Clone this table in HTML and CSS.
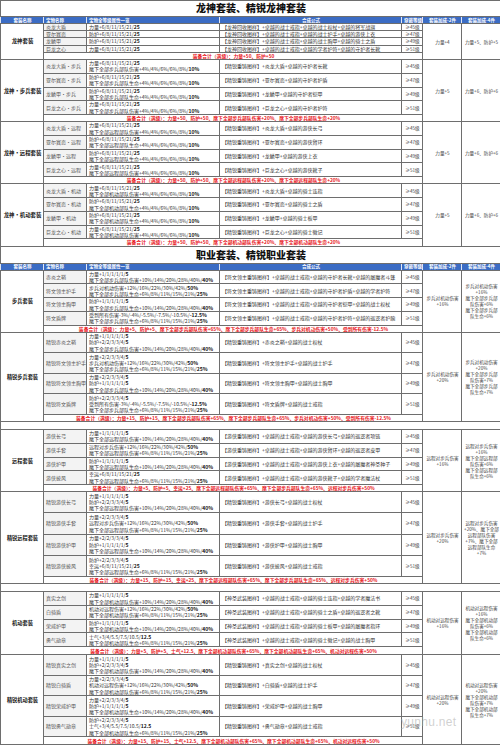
FILE: index.html
```html
<!DOCTYPE html>
<html lang="zh-CN">
<head>
<meta charset="utf-8">
<title>龙神套装、精锐龙神套装</title>
<link rel="stylesheet" href="styles.css">
</head>
<body>
<div class="page">
<table class="sheet">
<colgroup>
<col class="c1"><col class="c2"><col class="c3"><col class="c4"><col class="c5"><col class="c6"><col class="c7">
</colgroup>
<tbody>
<tr class="title t1"><td colspan="7">龙神套装、精锐龙神套装</td></tr>
<tr class="hd"><td class="ctr">套装名称</td><td>宝物名称</td><td>宝物全等级属性一览</td><td class="ctr">合成公式</td><td class="ctr">穿戴等级</td><td class="ctr">套装加成-2件</td><td class="ctr">套装加成-4件</td></tr>

<tr class="r1"><td class="set" rowspan="5">龙神套装</td><td class="item">炎龙大盾</td><td class="attr">力量+6/8/11/15/21/<b>25</b></td><td class="fm">【龙神回收图样】+卓越的战士戒指+卓越的战士权杖+卓越的将军战旗</td><td class="lvl">≥45级</td><td class="bonus" rowspan="5">力量+4</td><td class="bonus" rowspan="5">力量+5、防护+5</td></tr>
<tr class="r1"><td class="item">亚尔赛恋</td><td class="attr">防护+6/8/11/15/21/<b>25</b></td><td class="fm">【龙神回收图样】+卓越的战士戒指+卓越的战士护手+卓越的游侠上衣</td><td class="lvl">≥47级</td></tr>
<tr class="r1"><td class="item">龙鳞甲</td><td class="attr">防护+6/8/11/15/21/<b>25</b></td><td class="fm">【龙神回收图样】+卓越的战士戒指+卓越的战士胸甲+卓越的骑士之盾</td><td class="lvl">≥49级</td></tr>
<tr class="r1"><td class="item">巨龙之心</td><td class="attr">力量+6/8/11/15/21/<b>25</b></td><td class="fm">【龙神回收图样】+卓越的战士戒指+卓越的学者护符+卓越的守护者长靴</td><td class="lvl">≥51级</td></tr>
<tr class="tot"><td class="total" colspan="4">装备合计（满级）：力量+50、防护+50</td></tr>

<tr class="r2 sep"><td class="set" rowspan="5">龙神·步兵套装</td><td class="item">炎龙大盾·步兵</td><td class="attr">力量+6/8/11/15/21/<b>25</b><br>麾下全部步兵部队伤害+4%/4%/6%/6%/8%/<b>10%</b></td><td class="fm">【精锐重铸图样】+炎龙大盾+卓越的守护者长靴</td><td class="lvl">≥45级</td><td class="bonus" rowspan="5">力量+5</td><td class="bonus" rowspan="5">力量+6、防护+6</td></tr>
<tr class="r2"><td class="item">亚尔赛恋·步兵</td><td class="attr">防护+6/8/11/15/21/<b>25</b><br>麾下全部步兵部队生命+4%/4%/6%/6%/8%/<b>10%</b></td><td class="fm">【精锐重铸图样】+亚尔赛恋+卓越的守护者护盾</td><td class="lvl">≥47级</td></tr>
<tr class="r2"><td class="item">龙鳞甲·步兵</td><td class="attr">防护+6/8/11/15/21/<b>25</b><br>麾下全部步兵部队生命+4%/4%/6%/6%/8%/<b>10%</b></td><td class="fm">【精锐重铸图样】+龙鳞甲+卓越的守护者铠甲</td><td class="lvl">≥49级</td></tr>
<tr class="r2"><td class="item">巨龙之心·步兵</td><td class="attr">力量+6/8/11/15/21/<b>25</b><br>麾下全部步兵部队伤害+4%/4%/6%/6%/8%/<b>10%</b></td><td class="fm">【精锐重铸图样】+巨龙之心+卓越的守护者护符</td><td class="lvl">≥51级</td></tr>
<tr class="tot"><td class="total" colspan="4">装备合计（满级）：力量+50、防护+50、麾下全部步兵部队伤害+20%、麾下全部步兵部队生命+20%</td></tr>

<tr class="r2 sep"><td class="set" rowspan="5">龙神·远程套装</td><td class="item">炎龙大盾·远程</td><td class="attr">力量+6/8/11/15/21/<b>25</b><br>麾下全部远程部队伤害+4%/4%/6%/6%/8%/<b>10%</b></td><td class="fm">【精锐重铸图样】+炎龙大盾+卓越的游侠长弓</td><td class="lvl">≥45级</td><td class="bonus" rowspan="5">力量+5</td><td class="bonus" rowspan="5">力量+6、防护+6</td></tr>
<tr class="r2"><td class="item">亚尔赛恋·远程</td><td class="attr">防护+6/8/11/15/21/<b>25</b><br>麾下全部远程部队生命+4%/4%/6%/6%/8%/<b>10%</b></td><td class="fm">【精锐重铸图样】+亚尔赛恋+卓越的游侠臂环</td><td class="lvl">≥47级</td></tr>
<tr class="r2"><td class="item">龙鳞甲·远程</td><td class="attr">防护+6/8/11/15/21/<b>25</b><br>麾下全部远程部队生命+4%/4%/6%/6%/8%/<b>10%</b></td><td class="fm">【精锐重铸图样】+龙鳞甲+卓越的游侠上衣</td><td class="lvl">≥49级</td></tr>
<tr class="r2"><td class="item">巨龙之心·远程</td><td class="attr">力量+6/8/11/15/21/<b>25</b><br>麾下全部远程部队伤害+4%/4%/6%/6%/8%/<b>10%</b></td><td class="fm">【精锐重铸图样】+巨龙之心+卓越的游侠靴子</td><td class="lvl">≥51级</td></tr>
<tr class="tot"><td class="total" colspan="4">装备合计（满级）：力量+50、防护+50、麾下全部远程部队伤害+20%、麾下全部远程部队生命+20%</td></tr>

<tr class="r2 sep"><td class="set" rowspan="5">龙神·机动套装</td><td class="item">炎龙大盾·机动</td><td class="attr">力量+6/8/11/15/21/<b>25</b><br>麾下全部机动部队伤害+4%/4%/6%/6%/8%/<b>10%</b></td><td class="fm">【精锐重铸图样】+炎龙大盾+卓越的骑士连指</td><td class="lvl">≥45级</td><td class="bonus" rowspan="5">力量+5</td><td class="bonus" rowspan="5">力量+6、防护+6</td></tr>
<tr class="r2"><td class="item">亚尔赛恋·机动</td><td class="attr">防护+6/8/11/15/21/<b>25</b><br>麾下全部机动部队生命+4%/4%/6%/6%/8%/<b>10%</b></td><td class="fm">【精锐重铸图样】+亚尔赛恋+卓越的骑士之盾</td><td class="lvl">≥47级</td></tr>
<tr class="r2"><td class="item">龙鳞甲·机动</td><td class="attr">防护+6/8/11/15/21/<b>25</b><br>麾下全部机动部队生命+4%/4%/6%/6%/8%/<b>10%</b></td><td class="fm">【精锐重铸图样】+龙鳞甲+卓越的骑士板甲</td><td class="lvl">≥49级</td></tr>
<tr class="r2"><td class="item">巨龙之心·机动</td><td class="attr">力量+6/8/11/15/21/<b>25</b><br>麾下全部机动部队伤害+4%/4%/6%/6%/8%/<b>10%</b></td><td class="fm">【精锐重铸图样】+巨龙之心+卓越的骑士徽记</td><td class="lvl">≥51级</td></tr>
<tr class="tot"><td class="total" colspan="4">装备合计（满级）：力量+50、防护+50、麾下全部机动部队伤害+20%、麾下全部机动部队生命+20%</td></tr>

<tr class="title t2"><td colspan="7">职业套装、精锐职业套装</td></tr>
<tr class="hd"><td class="ctr">套装名称</td><td>宝物名称</td><td>宝物全等级属性一览</td><td class="ctr">合成公式</td><td class="ctr">穿戴等级</td><td class="ctr">套装加成-2件</td><td class="ctr">套装加成-4件</td></tr>

<tr class="r2"><td class="set plain" rowspan="5">步兵套装</td><td class="item">赤炎之鞘</td><td class="attr">力量+1/1/1/1/1/<b>5</b><br>麾下全部步兵部队伤害+10%/14%/20%/28%/40%/<b>40%</b></td><td class="fm">【符文领主重铸图样】+卓越的战士戒指+卓越的守护者长靴+卓越的屠魔者斗篷</td><td class="lvl">≥45级</td><td class="bonus" rowspan="5">步兵对机动伤害<br>+16%</td><td class="bonus" rowspan="5">步兵对机动伤害<br>+16%<br>麾下全部步兵部<br>队伤害+6%<br>麾下全部步兵部<br>队生命+6%</td></tr>
<tr class="r2"><td class="item">符文领主护手</td><td class="attr">步兵对机动伤害+12%/16%/22%/30%/42%/<b>50%</b><br>麾下全部步兵部队生命+6%/8%/11%/15%/21%/<b>25%</b></td><td class="fm">【符文领主重铸图样】+卓越的战士戒指+卓越的守护者护盾+卓越的学者护符</td><td class="lvl">≥47级</td></tr>
<tr class="r2"><td class="item">符文领主胸甲</td><td class="attr">防护+1/1/1/1/1/<b>5</b><br>麾下全部步兵部队生命+10%/14%/20%/28%/40%/<b>40%</b></td><td class="fm">【符文领主重铸图样】+卓越的战士戒指+卓越的守护者铠甲+卓越的战士权杖</td><td class="lvl">≥49级</td></tr>
<tr class="r2"><td class="item">符文盾牌</td><td class="attr">受到所有伤害-3%/-4%/-5.5%/-7.5%/-10.5%/<b>-12.5%</b><br>麾下全部步兵部队生命+6%/8%/11%/15%/21%/<b>25%</b></td><td class="fm">【符文领主重铸图样】+卓越的战士戒指+卓越的守护者护符+卓越的巡逻者护腕</td><td class="lvl">≥51级</td></tr>
<tr class="tot2"><td class="total" colspan="4">装备合计（满级）：力量+5、防护+5、麾下全部步兵部队伤害+65%、麾下全部步兵部队生命+65%、步兵对机动伤害+50%、受到所有伤害-12.5%</td></tr>

<tr class="r3 sep"><td class="set plain" rowspan="5">精锐步兵套装</td><td class="item">精锐赤炎之鞘</td><td class="attr">力量+1/1/1/1/1/<b>5</b><br>防护+2/2/3/3/4/<b>5</b><br>麾下全部步兵部队伤害+10%/14%/20%/28%/40%/<b>40%</b></td><td class="fm">【精锐重铸图样】+赤炎之鞘+卓越的战士权杖</td><td class="lvl">≥45级</td><td class="bonus" rowspan="5">步兵对机动伤害<br>+20%</td><td class="bonus" rowspan="5">步兵对机动伤害<br>+20%<br>麾下全部步兵部<br>队伤害+7%<br>麾下全部步兵部<br>队生命+7%</td></tr>
<tr class="r3"><td class="item">精锐符文领主护手</td><td class="attr">力量+2/2/3/3/4/<b>5</b><br>步兵对机动伤害+12%/16%/22%/30%/42%/<b>50%</b><br>麾下全部步兵部队生命+6%/8%/11%/15%/21%/<b>25%</b></td><td class="fm">【精锐重铸图样】+符文领主护手+卓越的战士护手</td><td class="lvl">≥47级</td></tr>
<tr class="r3"><td class="item">精锐符文领主胸甲</td><td class="attr">力量+2/2/3/3/4/<b>5</b><br>防护+1/1/1/1/1/<b>5</b><br>麾下全部步兵部队生命+10%/14%/20%/28%/40%/<b>40%</b></td><td class="fm">【精锐重铸图样】+符文领主胸甲+卓越的战士胸甲</td><td class="lvl">≥49级</td></tr>
<tr class="r3"><td class="item">精锐符文盾牌</td><td class="attr">防护+2/2/3/3/4/<b>5</b><br>受到所有伤害-3%/-4%/-5.5%/-7.5%/-10.5%/<b>-12.5%</b><br>麾下全部步兵部队生命+6%/8%/11%/15%/21%/<b>25%</b></td><td class="fm">【精锐重铸图样】+符文盾牌+卓越的战士戒指</td><td class="lvl">≥51级</td></tr>
<tr class="tot"><td class="total" colspan="4">装备合计（满级）：力量+15、防护+15、麾下全部步兵部队伤害+65%、麾下全部步兵部队生命+65%、步兵对机动伤害+50%、受到所有伤害-12.5%</td></tr>
<tr class="gap"><td colspan="7"></td></tr>

<tr class="r2"><td class="set plain" rowspan="5">远程套装</td><td class="item">游侠长弓</td><td class="attr">力量+1/1/1/1/1/<b>5</b><br>麾下全部远程部队伤害+10%/14%/20%/28%/40%/<b>40%</b></td><td class="fm">【游侠重铸图样】+卓越的战士戒指+卓越的游侠长弓+卓越的巡逻者项链</td><td class="lvl">≥45级</td><td class="bonus" rowspan="5">远程对步兵伤害<br>+16%</td><td class="bonus" rowspan="5">远程对步兵伤害<br>+16%<br>麾下全部远程部<br>队伤害+6%<br>麾下全部远程部<br>队生命+6%</td></tr>
<tr class="r2"><td class="item">游侠手套</td><td class="attr">远程对步兵伤害+12%/16%/22%/30%/42%/<b>50%</b><br>麾下全部远程部队伤害+6%/8%/11%/15%/21%/<b>25%</b></td><td class="fm">【游侠重铸图样】+卓越的战士戒指+卓越的游侠臂环+卓越的巡逻者皮甲</td><td class="lvl">≥47级</td></tr>
<tr class="r2"><td class="item">游侠护甲</td><td class="attr">防护+1/1/1/1/1/<b>5</b><br>麾下全部远程部队生命+10%/14%/20%/28%/40%/<b>40%</b></td><td class="fm">【游侠重铸图样】+卓越的战士戒指+卓越的游侠上衣+卓越的屠魔者神圣种子</td><td class="lvl">≥49级</td></tr>
<tr class="r2"><td class="item">游侠披风</td><td class="attr">幸运+6/8/11/15/21/<b>25</b><br>麾下全部远程部队生命+6%/8%/11%/15%/21%/<b>25%</b></td><td class="fm">【游侠重铸图样】+卓越的战士戒指+卓越的游侠靴子+卓越的学者魔法杖</td><td class="lvl">≥51级</td></tr>
<tr class="tot2"><td class="total" colspan="4">装备合计（满级）：力量+5、防护+5、幸运+25、麾下全部远程部队伤害+65%、麾下全部步兵部队生命+65%、远程对步兵伤害+50%</td></tr>

<tr class="r3b sep"><td class="set plain" rowspan="5">精锐远程套装</td><td class="item">精锐游侠长弓</td><td class="attr">力量+1/1/1/1/1/<b>5</b><br>防护+2/2/3/3/4/<b>5</b><br>麾下全部远程部队伤害+10%/14%/20%/28%/40%/<b>40%</b></td><td class="fm">【精锐重铸图样】+游侠长弓+卓越的战士权杖</td><td class="lvl">≥45级</td><td class="bonus" rowspan="5">远程对步兵伤害<br>+20%</td><td class="bonus" rowspan="5">远程对步兵伤害<br>+20%、麾下全部<br>远程部队伤害<br>+7%、麾下全部<br>远程部队生命<br>+7%</td></tr>
<tr class="r3b"><td class="item">精锐游侠手套</td><td class="attr">力量+2/2/3/3/4/<b>5</b><br>远程对步兵伤害+12%/16%/22%/30%/42%/<b>50%</b><br>麾下全部远程部队伤害+6%/8%/11%/15%/21%/<b>25%</b></td><td class="fm">【精锐重铸图样】+游侠手套+卓越的战士护手</td><td class="lvl">≥47级</td></tr>
<tr class="r3b"><td class="item">精锐游侠护甲</td><td class="attr">力量+2/2/3/3/4/<b>5</b><br>防护+1/1/1/1/1/<b>5</b><br>麾下全部远程部队生命+10%/14%/20%/28%/40%/<b>40%</b></td><td class="fm">【精锐重铸图样】+游侠护甲+卓越的战士胸甲</td><td class="lvl">≥49级</td></tr>
<tr class="r3b"><td class="item">精锐游侠披风</td><td class="attr">防护+2/2/3/3/4/<b>5</b><br>幸运+6/8/11/15/21/<b>25</b><br>麾下全部远程部队生命+6%/8%/11%/15%/21%/<b>25%</b></td><td class="fm">【精锐重铸图样】+游侠披风+卓越的战士戒指</td><td class="lvl">≥51级</td></tr>
<tr class="tot2"><td class="total" colspan="4">装备合计（满级）：力量+15、防护+15、幸运+25、麾下全部远程部队伤害+65%、麾下全部步兵部队生命+65%、远程对步兵伤害+50%</td></tr>
<tr class="gap"><td colspan="7"></td></tr>

<tr class="r2"><td class="set plain" rowspan="5">机动套装</td><td class="item">真实之剑</td><td class="attr">力量+1/1/1/1/1/<b>5</b><br>麾下全部机动部队伤害+10%/14%/20%/28%/40%/<b>40%</b></td><td class="fm">【神圣武装图样】+卓越的战士戒指+卓越的骑士连指+卓越的学者魔法书</td><td class="lvl">≥45级</td><td class="bonus" rowspan="5">机动对远程伤害<br>+16%</td><td class="bonus" rowspan="5">机动对远程伤害<br>+16%<br>麾下全部机动部<br>队伤害+6%<br>麾下全部机动部<br>队生命+6%</td></tr>
<tr class="r2"><td class="item">白骑盾</td><td class="attr">机动对远程伤害+12%/16%/22%/30%/42%/<b>50%</b><br>麾下全部机动部队伤害+6%/8%/11%/15%/21%/<b>25%</b></td><td class="fm">【神圣武装图样】+卓越的战士戒指+卓越的骑士之盾+卓越的巡逻者之靴</td><td class="lvl">≥47级</td></tr>
<tr class="r2"><td class="item">荣威护甲</td><td class="attr">防护+1/1/1/1/1/<b>5</b><br>麾下全部机动部队生命+10%/14%/20%/28%/40%/<b>40%</b></td><td class="fm">【神圣武装图样】+卓越的战士戒指+卓越的骑士板甲+卓越的屠魔者指环</td><td class="lvl">≥49级</td></tr>
<tr class="r2"><td class="item">勇气勋章</td><td class="attr">士气+3/4/5.5/7.5/10.5/<b>12.5</b><br>麾下全部机动部队生命+6%/8%/11%/15%/21%/<b>25%</b></td><td class="fm">【神圣武装图样】+卓越的战士戒指+卓越的骑士徽记+卓越的战士胸甲</td><td class="lvl">≥51级</td></tr>
<tr class="tot3"><td class="total" colspan="4">装备合计（满级）：力量+5、防护+5、士气+12.5、麾下全部机动部队伤害+65%、麾下全部机动部队生命+65%、机动对远程伤害+50%</td></tr>

<tr class="r3 sep"><td class="set plain" rowspan="5">精锐机动套装</td><td class="item">精锐真实之剑</td><td class="attr">力量+1/1/1/1/1/<b>5</b><br>防护+2/2/3/3/4/<b>5</b><br>麾下全部机动部队伤害+10%/14%/20%/28%/40%/<b>40%</b></td><td class="fm">【精锐重铸图样】+真实之剑+卓越的战士权杖</td><td class="lvl">≥45级</td><td class="bonus" rowspan="5">机动对远程伤害<br>+20%</td><td class="bonus" rowspan="5">机动对远程伤害<br>+20%<br>麾下全部机动部<br>队伤害+7%<br>麾下全部机动部<br>队生命+7%</td></tr>
<tr class="r3"><td class="item">精锐白骑盾</td><td class="attr">力量+2/2/3/3/4/<b>5</b><br>机动对远程伤害+12%/16%/22%/30%/42%/<b>50%</b><br>麾下全部机动部队伤害+6%/8%/11%/15%/21%/<b>25%</b></td><td class="fm">【精锐重铸图样】+白骑盾+卓越的战士护手</td><td class="lvl">≥47级</td></tr>
<tr class="r3"><td class="item">精锐荣威护甲</td><td class="attr">力量+2/2/3/3/4/<b>5</b><br>防护+1/1/1/1/1/<b>5</b><br>麾下全部机动部队生命+10%/14%/20%/28%/40%/<b>40%</b></td><td class="fm">【精锐重铸图样】+荣威护甲+卓越的战士胸甲</td><td class="lvl">≥49级</td></tr>
<tr class="r3"><td class="item">精锐勇气勋章</td><td class="attr">防护+2/2/3/3/4/<b>5</b><br>士气+3/4/5.5/7.5/10.5/<b>12.5</b><br>麾下全部机动部队生命+6%/8%/11%/15%/21%/<b>25%</b></td><td class="fm">【精锐重铸图样】+勇气勋章+卓越的战士戒指</td><td class="lvl">≥51级</td></tr>
<tr class="tot3"><td class="total" colspan="4">装备合计（满级）：力量+15、防护+15、士气+12.5、麾下全部机动部队伤害+65%、麾下全部机动部队生命+65%、机动对远程伤害+50%</td></tr>
</tbody>
</table>
<div class="foot"></div>
<div class="watermark">yunhu.net</div>
</div>
</body>
</html>
```

FILE: styles.css
```css
html, body {
  margin: 0;
  padding: 0;
  background: #ffffff;
}

.page {
  position: relative;
  width: 500px;
}

.sheet {
  width: 500px;
  border-collapse: collapse;
  table-layout: fixed;
  font-family: "Noto Sans CJK SC", "Liberation Sans", sans-serif;
  font-size: 5px;
  line-height: 6.2px;
  color: #333333;
}

.c1 { width: 43px; }
.c2 { width: 43px; }
.c3 { width: 133px; }
.c4 { width: 182px; }
.c5 { width: 21px; }
.c6 { width: 39px; }
.c7 { width: 39px; }

.sheet td {
  border: 1px solid #6e6e6e;
  padding: 0 1px 0 2px;
  white-space: nowrap;
  overflow: hidden;
  vertical-align: middle;
}

.sheet b {
  font-weight: 700;
  color: #111111;
}

.title td {
  text-align: center;
  font-family: "Noto Sans CJK SC", "Liberation Serif", serif;
  font-weight: 900;
  font-size: 10px;
  color: #111111;
  border-color: #6e6e6e;
  background: #ffffff;
}

.t1 { height: 16px; }
.t2 { height: 17px; }

.hd { height: 7px; }

.hd td {
  background: #3b6cc4;
  color: #ffffff;
  font-weight: 700;
  font-size: 4.5px;
  line-height: 5px;
  border-color: #dfe6f3 #dfe6f3 #6e6e6e;
}

.hd td.ctr { text-align: center; }

.r1 { height: 7px; }
.r2 { height: 13.75px; }
.r3 { height: 20.5px; }
.r3b { height: 21.2px; }
.tot { height: 6px; }
.tot2 { height: 7px; }
.tot3 { height: 8px; }
.gap { height: 8px; }

.gap td {
  border-left-color: #6e6e6e;
  border-right-color: #6e6e6e;
}

.sep > td {
  border-top: 1px solid #3a3a3a;
}

.set {
  text-align: center;
  font-weight: 700;
  font-size: 5.4px;
  color: #111111;
  background: #ffffff;
}

.set.plain {
  font-weight: 700;
  font-size: 5.2px;
}

.item {
  background: #f3f3f3;
  color: #555555;
}

.attr {
  color: #333333;
}

.fm {
  color: #333333;
}

.lvl {
  text-align: center;
  color: #444444;
  font-size: 4.6px;
}

.bonus {
  text-align: center;
  white-space: normal;
  color: #444444;
  font-size: 4.6px;
  line-height: 6px;
  padding: 0 1px;
}

.total {
  text-align: center;
  color: #e8151b;
  font-weight: 700;
  font-size: 4.8px;
}

.foot {
  height: 10px;
  border-bottom: 1px solid #e2e2e2;
  margin-bottom: 0;
}

.watermark {
  position: absolute;
  left: 401px;
  top: 715px;
  font-family: "Liberation Sans", sans-serif;
  font-size: 12px;
  letter-spacing: 0.3px;
  color: rgba(170, 170, 170, 0.55);
  pointer-events: none;
}
```
